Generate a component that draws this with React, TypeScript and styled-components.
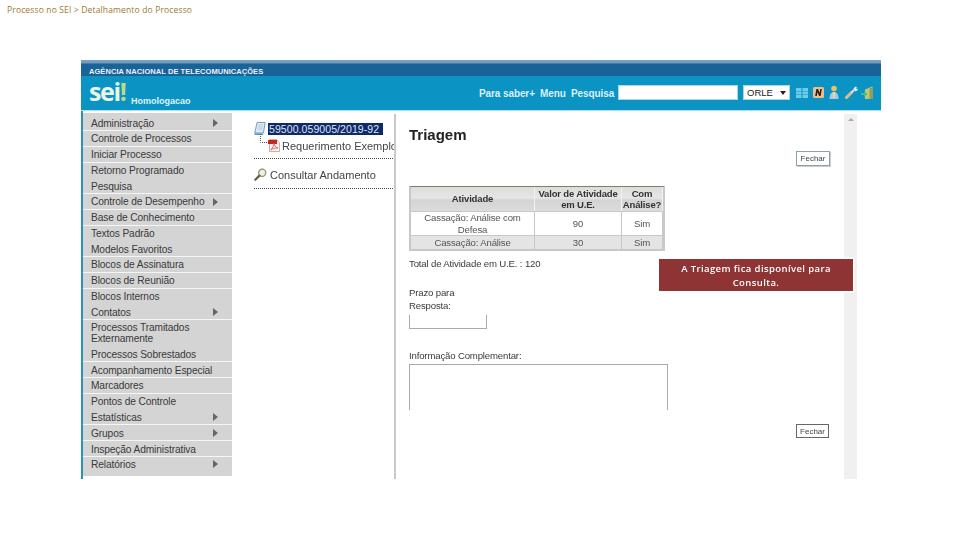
import React from "react";
import styled, { createGlobalStyle } from "styled-components";

const Global = createGlobalStyle`
  html, body { margin: 0; padding: 0; background: #fff; }
  body { width: 960px; height: 540px; overflow: hidden; font-family: "Liberation Sans", Arial, sans-serif; }
`;
const Page = styled.div`
  position: relative; width: 960px; height: 540px; display: flex; flex-direction: column;
`;
const SlideTitle = styled.div`
  height: 60px; box-sizing: border-box; padding: 4px 0 0 7px;
  font: 8.5px/11px "Open Sans", sans-serif; color: #9b7a30; letter-spacing: .15px;
`;
const Shot = styled.div`
  width: 800px; height: 419px; margin-left: 81px; display: flex; flex-direction: column;
  filter: blur(.4px); font-size: 10px; color: #333;
`;
const TopStrip = styled.div`
  height: 16px; box-sizing: border-box; padding: 7px 0 0 8px;
  background: linear-gradient(#7fa6c4 0, #6e9abb 3px, #1a6399 4px, #1a6399 100%);
  color: #e8f2f8; font-weight: 700; font-size: 7.5px; line-height: 9px; letter-spacing: .06px; white-space: nowrap;
`;
const Header = styled.div`
  height: 34px; background: #0b93c4; display: flex; align-items: flex-start; border-bottom: 1px solid #aee0ee; box-sizing: content-box;
`;
const Brand = styled.div`
  width: 398px; display: flex; align-items: flex-start; padding-left: 8px; box-sizing: border-box;
`;
const Logo = styled.div`
  font: 700 25px/34px "Open Sans", sans-serif; letter-spacing: -1.4px; color: #e9f6ea; width: 42px; height: 34px;
  margin-top: -2px;
  span { color: #b9dc8a; }
`;
const Env = styled.div`
  color: #dff3fa; font-weight: 700; font-size: 9px; line-height: 12px; margin-top: 19px; white-space: nowrap;
`;
const Nav = styled.div`
  flex: 1; display: flex; align-items: center; height: 33px;
`;
const NavLink = styled.span<{ $w: number }>`
  color: #d8f0f8; font-weight: 700; font-size: 10px; letter-spacing: -.1px; width: ${p => p.$w}px; white-space: nowrap; padding-top: 2px;
`;
const SearchBox = styled.div`
  width: 120px; height: 15px; background: #fff; box-shadow: inset 0 0 0 1px #a8d8e8; margin-right: 5px;
`;
const Selector = styled.div`
  width: 47px; height: 15px; background: #fff; box-sizing: border-box; box-shadow: inset 0 0 0 1px #a8d8e8;
  display: flex; align-items: center; justify-content: space-between; padding: 0 4px; color: #222; font-size: 9.5px; margin-right: 6px;
`;
const Caret = styled.span`
  width: 0; height: 0; border-left: 3px solid transparent; border-right: 3px solid transparent; border-top: 4px solid #222;
`;
const Tools = styled.div`
  display: flex; align-items: center; gap: 5px;
`;
const Body = styled.div`
  flex: 1; display: flex; border-left: 2px solid #2a93b5; min-height: 0;
`;
const Menu = styled.div`
  width: 149px; align-self: flex-start; margin-top: 2px; background: #d4d4d4; display: flex; flex-direction: column;
`;
const MenuRow = styled.div<{ $h?: number; $line?: boolean; $top?: number; $bottom?: number }>`
  height: ${p => p.$h ?? 15.75}px; box-sizing: border-box;
  padding: ${p => p.$top ?? 1}px 14px ${p => p.$bottom ?? 0}px 8px;
  border-bottom: 1px solid ${p => (p.$line ? "#f6f6f6" : "#d4d4d4")};
  display: flex; align-items: center; justify-content: space-between; line-height: 11px; color: #3a3a3a; font-size: 10.2px; letter-spacing: -.12px;
`;
const Arrow = styled.span`
  flex: none; width: 0; height: 0; border-top: 4px solid transparent; border-bottom: 4px solid transparent; border-left: 5px solid #666;
`;
const Tree = styled.div`
  width: 162px; box-sizing: border-box; padding: 11px 0 0 22px; overflow: hidden; color: #444; font-size: 11px;
`;
const TreeRow = styled.div`
  display: flex; align-items: center; height: 13px; white-space: nowrap; gap: 2px;
`;
const Selected = styled.span`
  background: #10296a; color: #dfe6f2; width: 115px; height: 12px; line-height: 12px; font-size: 10.5px; padding-left: 1px; box-sizing: border-box; letter-spacing: .08px;
`;
const ChildRow = styled(TreeRow)`
  margin-top: 4px; padding-left: 6px;
`;
const Dotted = styled.div<{ $gap: number }>`
  margin-top: ${p => p.$gap}px; height: 0; border-top: 1px dotted #444; margin-right: 1px;
`;
const QueryRow = styled(TreeRow)`
  margin-top: 9px; gap: 3px;
`;
const Divider = styled.div`
  width: 2px; margin-top: 3px; background: #c9c9c9;
`;
const Content = styled.div`
  width: 448px; box-sizing: border-box; padding: 14px 0 0 13px; display: flex; flex-direction: column; color: #3a3a3a; font-size: 9.6px; letter-spacing: -.16px;
`;
const Title = styled.h1`
  margin: 0; font-size: 15px; line-height: 19px; font-weight: 700; color: #222; letter-spacing: 0;
`;
const CloseRow = styled.div<{ $mt: number }>`
  display: flex; justify-content: flex-end; margin-top: ${p => p.$mt}px; padding-right: 14px; box-sizing: border-box; width: 435px;
`;
const CloseBtn = styled.div`
  width: 34px; height: 15px; box-sizing: border-box; border: 1px solid #8fa0ac; box-shadow: 1px 1px 0 #ccc;
  display: flex; align-items: center; justify-content: center; font-size: 8px; letter-spacing: 0; color: #444;
`;
const CloseBtnDark = styled(CloseBtn)`
  width: 33px; height: 14px; border-color: #666; box-shadow: none; margin-right: 1px;
`;
const Table = styled.div`
  margin-top: 20px; width: 256px; box-sizing: border-box; border: 2px solid #c8c8c8; border-top: 1px solid #7d8060;
  background: #c8c8c8; display: grid; grid-template-columns: 124px 87px 41px; grid-template-rows: 24px 23px 13px; gap: 1px 0; text-align: center;
`;
const Th = styled.div`
  display: flex; align-items: center; justify-content: center; font-weight: 700; font-size: 9.5px; line-height: 11.5px; color: #333;
  background: linear-gradient(#dcdcdc, #e6e6e6 45%, #d4d4d4 55%, #dcdcdc); border-right: 1px solid #f2f2f2;
`;
const Td = styled.div<{ $alt?: boolean }>`
  display: flex; align-items: center; justify-content: center; font-size: 9.6px; line-height: 12px; color: #555;
  background: ${p => (p.$alt ? "#e4e4e4" : "#fff")}; border-right: 1px solid #c8c8c8;
`;
const Para = styled.div<{ $mt: number }>`
  margin-top: ${p => p.$mt}px; line-height: 13px; white-space: nowrap;
`;
const ShortInput = styled.div`
  margin-top: 2px; width: 78px; height: 15px; box-sizing: border-box; border: 1px solid #aaa; border-top-color: transparent;
`;
const LongInput = styled.div`
  margin-top: 2px; width: 259px; height: 46px; box-sizing: border-box; border: 1px solid #aaa; border-bottom: 0;
`;
const Scrollbar = styled.div`
  width: 13px; margin: 3px 0 0 0; background: #f0f0f0; display: flex; justify-content: center; padding-top: 4px; box-sizing: border-box;
`;
const ScrollUp = styled.span`
  width: 0; height: 0; border-left: 3px solid transparent; border-right: 3px solid transparent; border-bottom: 3px solid #aaa;
`;
const Callout = styled.div`
  position: absolute; left: 659px; top: 259px; width: 194px; height: 32px; box-sizing: border-box; background: #8f3434;
  box-shadow: 0 0 0 1.5px #fff; color: #fff; font: 600 9.5px/14px "Open Sans", sans-serif; text-align: center; padding: 3px 16px 0; letter-spacing: .4px;
`;

const items: [string, { arrow?: boolean; line?: boolean; h?: number; top?: number; bottom?: number }][] = [
  ["Administração", { arrow: true, line: true, h: 18, top: 3 }],
  ["Controle de Processos", { line: true }],
  ["Iniciar Processo", { line: true }],
  ["Retorno Programado", {}],
  ["Pesquisa", { line: true }],
  ["Controle de Desempenho", { arrow: true, line: true }],
  ["Base de Conhecimento", { line: true }],
  ["Textos Padrão", {}],
  ["Modelos Favoritos", { line: true }],
  ["Blocos de Assinatura", { line: true }],
  ["Blocos de Reunião", { line: true }],
  ["Blocos Internos", {}],
  ["Contatos", { arrow: true, line: true }],
  ["Processos Tramitados Externamente", { h: 26 }],
  ["Processos Sobrestados", { line: true, h: 16 }],
  ["Acompanhamento Especial", { line: true, h: 16 }],
  ["Marcadores", { line: true }],
  ["Pontos de Controle", {}],
  ["Estatísticas", { arrow: true, line: true }],
  ["Grupos", { arrow: true, line: true }],
  ["Inspeção Administrativa", { line: true, h: 16 }],
  ["Relatórios", { arrow: true, h: 19, top: 0, bottom: 4 }],
];

const GridIcon = () => (
  <svg width="12" height="10" viewBox="0 0 12 10">
    {[0, 1, 2].map(r => [0, 6.5].map(c => <rect key={`${r}${c}`} x={c} y={r * 3.5} width="5.5" height="3" fill="#6fcbe6" />))}
  </svg>
);
const NIcon = () => (
  <svg width="11" height="11" viewBox="0 0 11 11">
    <rect width="11" height="11" rx="1.5" fill="#eebd8c" />
    <path d="M2.2 9 3.4 2h1.6L6.6 6 7.3 2h1.5L7.6 9H6.1L4.5 5 3.8 9Z" fill="#2a1a10" />
  </svg>
);
const PersonIcon = () => (
  <svg width="10" height="15" viewBox="0 0 10 15">
    <circle cx="5" cy="3.5" r="2.8" fill="#ecc066" />
    <path d="M0.5 14c0-4.4 1.8-7 4.5-7s4.5 2.6 4.5 7Z" fill="#a9c9de" />
    <path d="M3.8 7h2.4l-.6 6H4.4Z" fill="#ecdca0" />
  </svg>
);
const WrenchIcon = () => (
  <svg width="13" height="13" viewBox="0 0 13 13" style={{ marginLeft: "1px" }}>
    <path d="M1.5 11.5 6.5 6.5" stroke="#e6b98a" strokeWidth="3" strokeLinecap="round" />
    <path d="M6.5 6.5 9 4" stroke="#dfe8ee" strokeWidth="2" />
    <path d="M8.3 2.8 10.3.8 12 1 10.6 2.9 10.9 3.3 12.6 2.2 12.5 4.2 10.3 5.4Z" fill="#eef2f4" />
  </svg>
);
const ExitIcon = () => (
  <svg width="12" height="14" viewBox="0 0 12 14" style={{ marginLeft: "-2px" }}>
    <path d="M4 3.5 11.5.5V13H4Z" fill="#c2c67a" />
    <path d="M8.5 2h3v11h-3Z" fill="#8fa04e" />
    <path d="M0 7h3V5l3.6 3L3 11V9H0Z" fill="#45b98a" />
  </svg>
);
const DocIcon = () => (
  <svg width="12" height="13" viewBox="0 0 12 13" style={{ flex: "none" }}>
    <path d="M3 .5h8.2L9.4 11H.8Z" fill="#dce8f4" stroke="#6f93b8" strokeWidth=".9" />
    <path d="M4.5 3h4.5M4 5h4.5M3.8 7h4.5" stroke="#a4bdd6" strokeWidth=".7" />
    <path d="M.5 12.2h8.6" stroke="#3f79ad" strokeWidth="1.2" />
  </svg>
);
const PdfIcon = () => (
  <svg width="12" height="13" viewBox="0 0 12 13" style={{ flex: "none" }}>
    <path d="M1.5.5h7l3 3v9h-10Z" fill="#fbeeee" stroke="#b9a0a0" strokeWidth=".8" />
    <path d="M0 1h9v4H0Z" fill="#c8241f" />
    <path d="M3 11c2-3 3-5 3-7 .4 3 2 4.5 4 5-3-.3-5 .5-7 2Z" fill="none" stroke="#d2544c" strokeWidth=".8" />
  </svg>
);
const Connector = () => (
  <svg width="8" height="9" viewBox="0 0 8 9" style={{ flex: "none", alignSelf: "flex-start", marginTop: "-5px", marginRight: "-2px" }}>
    <path d="M.5 0v8.5H8" fill="none" stroke="#555" strokeWidth="1" strokeDasharray="1 1" />
  </svg>
);
const LensIcon = () => (
  <svg width="13" height="13" viewBox="0 0 13 13" style={{ flex: "none" }}>
    <circle cx="8.2" cy="4.8" r="3.6" fill="#eef0e6" stroke="#8d8f7c" strokeWidth="1.2" />
    <path d="M5.4 7.6 1.3 11.7" stroke="#6b5a3c" strokeWidth="2.2" strokeLinecap="round" />
  </svg>
);

export default function App() {
  return (
    <Page>
      <Global />
      <SlideTitle>Processo no SEI &gt; Detalhamento do Processo</SlideTitle>
      <Shot>
        <TopStrip>AGÊNCIA NACIONAL DE TELECOMUNICAÇÕES</TopStrip>
        <Header>
          <Brand>
            <Logo>sei<span>!</span></Logo>
            <Env>Homologacao</Env>
          </Brand>
          <Nav>
            <NavLink $w={61}>Para saber+</NavLink>
            <NavLink $w={31}>Menu</NavLink>
            <NavLink $w={47}>Pesquisa</NavLink>
            <SearchBox />
            <Selector>ORLE<Caret /></Selector>
            <Tools>
              <GridIcon /><NIcon /><PersonIcon /><WrenchIcon /><ExitIcon />
            </Tools>
          </Nav>
        </Header>
        <Body>
          <Menu>
            {items.map(([label, o]) => (
              <MenuRow key={label} $h={o.h} $line={o.line} $top={o.top} $bottom={o.bottom}>
                <span>{label}</span>
                {o.arrow && <Arrow />}
              </MenuRow>
            ))}
          </Menu>
          <Tree>
            <TreeRow><DocIcon /><Selected>59500.059005/2019-92</Selected></TreeRow>
            <ChildRow><Connector /><PdfIcon />Requerimento Exemplo</ChildRow>
            <Dotted $gap={6} />
            <QueryRow><LensIcon />Consultar Andamento</QueryRow>
            <Dotted $gap={7} />
          </Tree>
          <Divider />
          <Content>
            <Title>Triagem</Title>
            <CloseRow $mt={7}><CloseBtn>Fechar</CloseBtn></CloseRow>
            <Table>
              <Th>Atividade</Th><Th>Valor de Atividade<br />em U.E.</Th><Th>Com<br />Análise?</Th>
              <Td>Cassação: Análise com<br />Defesa</Td><Td>90</Td><Td>Sim</Td>
              <Td $alt>Cassação: Análise</Td><Td $alt>30</Td><Td $alt>Sim</Td>
            </Table>
            <Para $mt={6}>Total de Atividade em U.E. : 120</Para>
            <Para $mt={16}>Prazo para<br />Resposta:</Para>
            <ShortInput />
            <Para $mt={20}>Informação Complementar:</Para>
            <LongInput />
            <CloseRow $mt={14}><CloseBtnDark>Fechar</CloseBtnDark></CloseRow>
          </Content>
          <Scrollbar><ScrollUp /></Scrollbar>
        </Body>
      </Shot>
      <Callout>A Triagem fica disponível para Consulta.</Callout>
    </Page>
  );
}
